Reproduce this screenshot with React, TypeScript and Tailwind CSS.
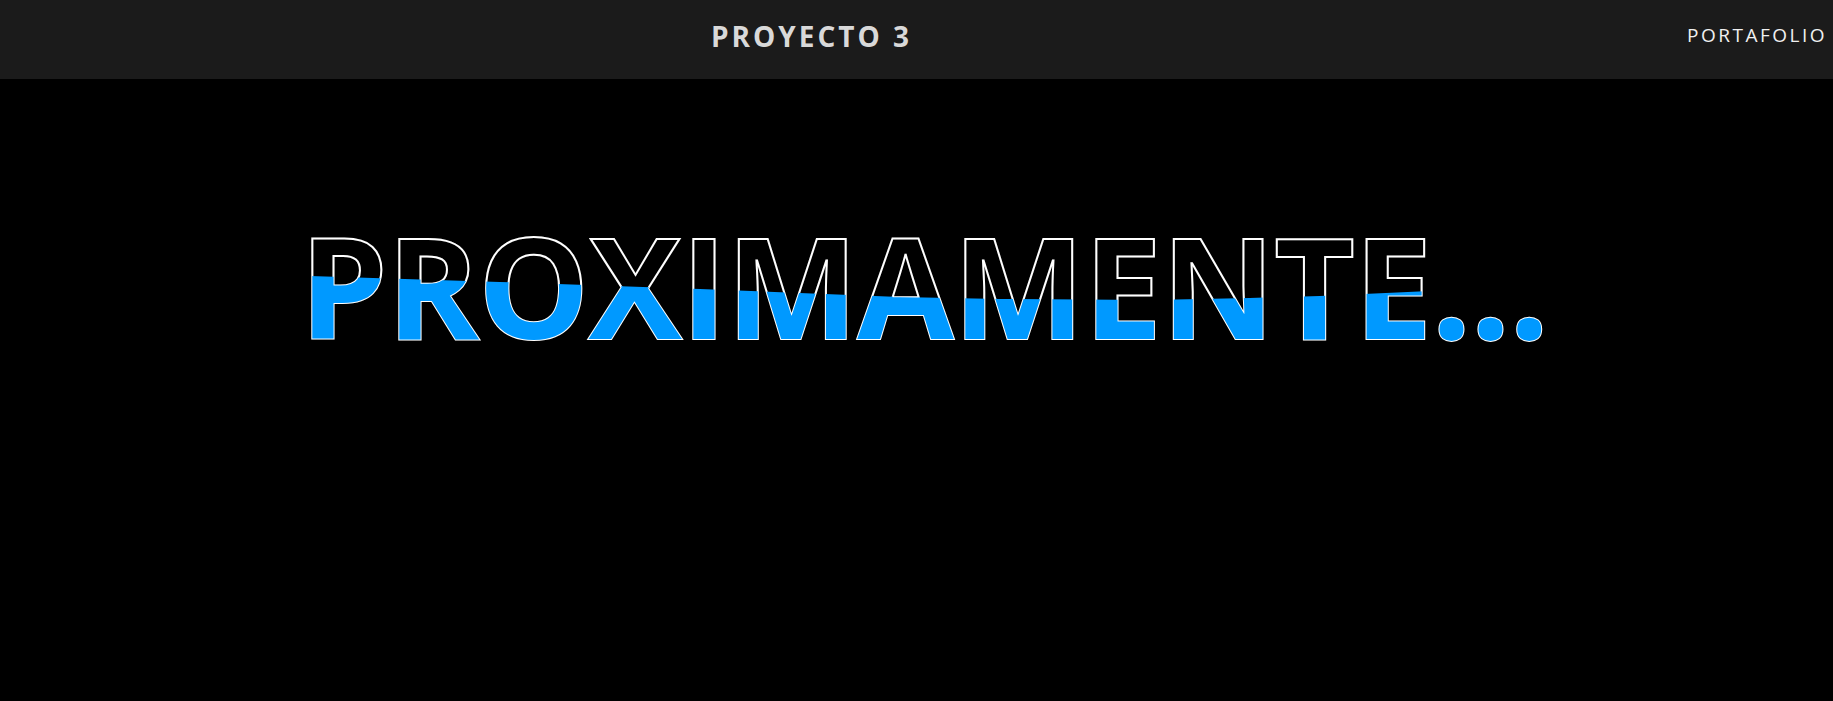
import React from "react";

export default function App() {
  return (
    <div className="min-h-screen w-full bg-black font-['Open_Sans',sans-serif]">
      {/* Top bar */}
      <header className="flex h-[79px] items-center justify-between bg-[#1b1b1b] pb-[8px]">
        <h1 className="ml-[711px] text-[28px] font-bold tracking-[3px] text-[#d9d9d9]">
          PROYECTO 3
        </h1>
        <nav className="mr-[6px]">
          <a href="#" className="text-[19px] tracking-[2.5px] text-[#f0f0f0]">
            PORTAFOLIO
          </a>
        </nav>
      </header>

      {/* Water text */}
      <main className="flex justify-center pt-[136px]">
        <div className="ml-[15px] grid">
          <h2 className="col-start-1 row-start-1 text-[140px] font-bold leading-none tracking-[-1px] text-[#0099ff] [clip-path:polygon(0_60px,10px_61px,200px_67px,400px_74px,600px_82px,700px_84px,850px_85px,950px_83px,1020px_81px,1130px_76px,1250px_70px,100%_68px,100%_100%,0_100%)]">
            PROXIMAMENTE...
          </h2>
          <h2 className="col-start-1 row-start-1 text-[140px] font-bold leading-none tracking-[-1px] text-transparent [-webkit-text-stroke:2px_white]">
            PROXIMAMENTE...
          </h2>
        </div>
      </main>
    </div>
  );
}
